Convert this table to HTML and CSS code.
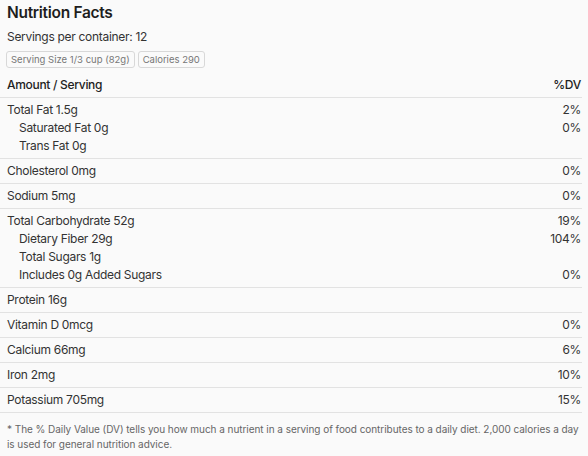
FILE: index.html
```html
<!DOCTYPE html>
<html>
<head>
<meta charset="utf-8">
<link rel="stylesheet" href="styles.css">
</head>
<body>
<div class="nf">
  <h1 class="title">Nutrition Facts</h1>
  <div class="servings">Servings per container: 12</div>
  <div class="chips">
    <span class="chip">Serving Size 1/3 cup (82g)</span>
    <span class="chip">Calories 290</span>
  </div>
  <div class="head"><span>Amount / Serving</span><span>%DV</span></div>
  <div class="group">
    <div class="row"><span>Total Fat 1.5g</span><span>2%</span></div>
    <div class="row sub"><span>Saturated Fat 0g</span><span>0%</span></div>
    <div class="row sub"><span>Trans Fat 0g</span><span></span></div>
  </div>
  <div class="group">
    <div class="row"><span>Cholesterol 0mg</span><span>0%</span></div>
  </div>
  <div class="group">
    <div class="row"><span>Sodium 5mg</span><span>0%</span></div>
  </div>
  <div class="group">
    <div class="row"><span>Total Carbohydrate 52g</span><span>19%</span></div>
    <div class="row sub"><span>Dietary Fiber 29g</span><span>104%</span></div>
    <div class="row sub"><span>Total Sugars 1g</span><span></span></div>
    <div class="row sub"><span>Includes 0g Added Sugars</span><span>0%</span></div>
  </div>
  <div class="group">
    <div class="row"><span>Protein 16g</span><span></span></div>
  </div>
  <div class="group">
    <div class="row"><span>Vitamin D 0mcg</span><span>0%</span></div>
  </div>
  <div class="group">
    <div class="row"><span>Calcium 66mg</span><span>6%</span></div>
  </div>
  <div class="group">
    <div class="row"><span>Iron 2mg</span><span>10%</span></div>
  </div>
  <div class="group">
    <div class="row"><span>Potassium 705mg</span><span>15%</span></div>
  </div>
  <p class="note">* The % Daily Value (DV) tells you how much a nutrient in a serving of food contributes to a daily diet. 2,000 calories a day is used for general nutrition advice.</p>
</div>
</body>
</html>
```
FILE: styles.css
```css
html, body {
  margin: 0;
  padding: 0;
  background: #fafafa;
}
body {
  font-family: Inter, "Noto Sans", sans-serif;
  color: #222;
}
.nf {
  width: 582px;
}
.title {
  margin: 0;
  padding: 1px 0 0 7px;
  font-size: 15.5px;
  font-weight: 600;
  letter-spacing: -0.3px;
  line-height: 24px;
  color: #1e1e1e;
}
.servings {
  padding: 3px 0 0 7px;
  font-size: 12px;
  letter-spacing: -0.3px;
  line-height: 18px;
  color: #333;
}
.chips {
  display: flex;
  gap: 3px;
  padding: 5px 0 0 6px;
}
.chip {
  font-size: 9.5px;
  line-height: 15px;
  color: #777;
  border: 1px solid #d8d8d8;
  border-radius: 3px;
  padding: 0 4px;
  background: #fafafa;
}
.head {
  display: flex;
  justify-content: space-between;
  padding: 8px 1px 3px 7px;
  font-size: 12px;
  letter-spacing: -0.3px;
  line-height: 18px;
  font-weight: 500;
  color: #222;
  border-bottom: 1px solid #e2e2e2;
}
.group {
  padding: 3px 0;
  border-bottom: 1px solid #e2e2e2;
}
.row {
  display: flex;
  justify-content: space-between;
  padding: 0 1px 0 7px;
  font-size: 12px;
  letter-spacing: -0.3px;
  line-height: 18px;
  color: #333;
}
.row.sub {
  padding-left: 19px;
}
.note {
  margin: 0 -6px 0 0;
  padding: 9px 0 0 7px;
  font-size: 10px;
  letter-spacing: -0.05px;
  line-height: 15px;
  color: #666;
}
```
